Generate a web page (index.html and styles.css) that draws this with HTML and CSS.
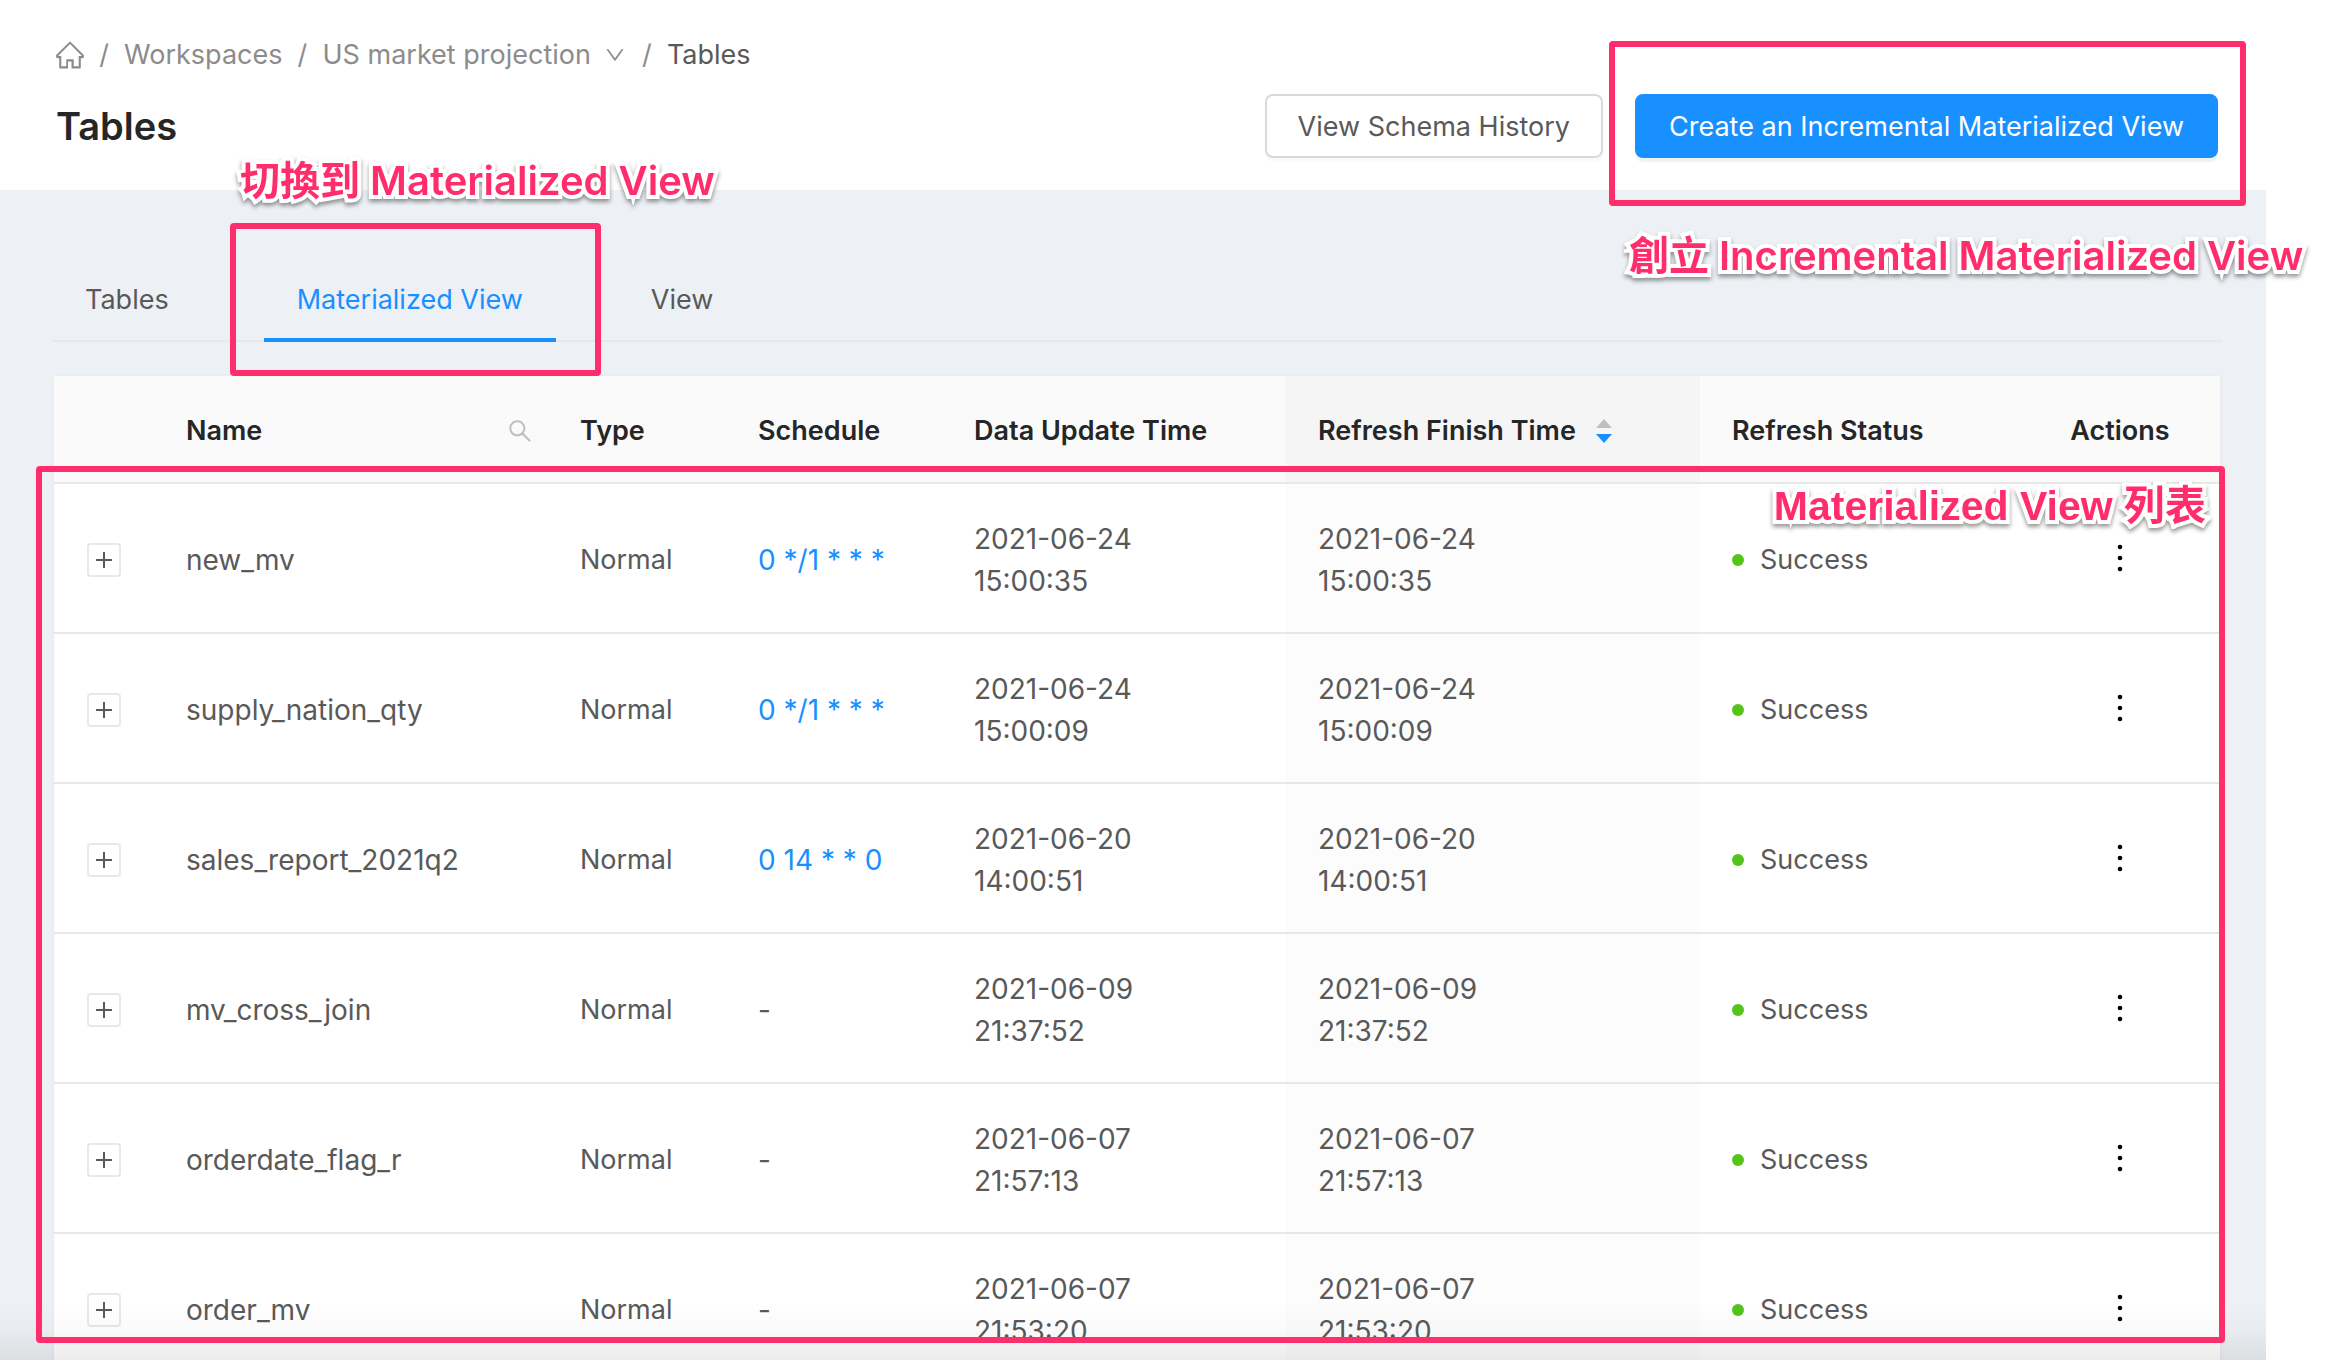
FILE: index.html
```html
<!DOCTYPE html>
<html lang="en">
<head>
<meta charset="utf-8">
<title>Tables</title>
<link rel="stylesheet" href="styles.css">
</head>
<body>
<svg class="defs" aria-hidden="true">
  <symbol id="home" viewBox="64 64 896 896"><path d="M946.5 505L534.600 93.400a31.930 31.930 0 0 0-45.200 0L77.500 505c-12 12-18.800 28.300-18.800 45.300 0 35.300 28.700 64 64 64h43.400V908c0 17.700 14.300 32 32 32H448V716h112v224h265.900c17.700 0 32-14.300 32-32V614.300h43.400c17 0 33.300-6.700 45.300-18.800 24.900-25 24.900-65.500-.1-90.500zM790 560v308H632V676c0-17.700-14.300-32-32-32H424c-17.700 0-32 14.300-32 32v192H234V542H130.900L512 161l381 381H790z" fill="currentColor"/></symbol>
  <symbol id="down" viewBox="64 64 896 896"><path d="M884 256h-75c-5.100 0-9.900 2.500-12.900 6.600L512 654.200 227.900 262.600c-3-4.100-7.800-6.600-12.900-6.600h-75c-6.500 0-10.300 7.400-6.500 12.700l352.600 486.100c12.800 17.600 39 17.600 51.700 0l352.600-486.100c3.900-5.300.1-12.700-6.400-12.700z" fill="currentColor"/></symbol>
  <symbol id="search" viewBox="64 64 896 896"><path d="M909.600 854.500L649.900 594.800C690.200 542.700 712 479 712 412c0-80.200-31.300-155.400-87.900-212.100-56.600-56.700-132-87.900-212.100-87.900s-155.500 31.300-212.100 87.900C143.200 256.500 112 331.800 112 412c0 80.100 31.300 155.500 87.900 212.100C256.500 680.800 331.800 712 412 712c67 0 130.600-21.800 182.700-62l259.700 259.600a8.200 8.200 0 0 0 11.600 0l43.600-43.500a8.200 8.200 0 0 0 0-11.600zM570.400 570.400C528 612.700 471.800 636 412 636s-116-23.300-158.400-65.600C211.300 528 188 471.800 188 412s23.300-116.100 65.600-158.400C296 211.300 352.200 188 412 188s116.100 23.200 158.400 65.600S636 352.200 636 412s-23.300 116.100-65.600 158.400z" fill="currentColor"/></symbol>
  <symbol id="more" viewBox="0 0 8 30"><circle cx="4" cy="4" r="2.300"/><circle cx="4" cy="15" r="2.300"/><circle cx="4" cy="26" r="2.300"/></symbol>
</svg>
<div class="page">
  <header class="header">
    <nav class="breadcrumb" aria-label="Breadcrumb">
      <a href="#" aria-label="Home"><svg class="icon-home"><use href="#home"/></svg></a>
      <span class="sep">/</span>
      <a href="#">Workspaces</a>
      <span class="sep">/</span>
      <a href="#" class="project">US market projection<svg class="icon-down"><use href="#down"/></svg></a>
      <span class="sep">/</span>
      <span class="current">Tables</span>
    </nav>
    <div class="title-row">
      <h1>Tables</h1>
      <div class="actions">
        <button class="btn" type="button">View Schema History</button>
        <div class="marked">
          <button class="btn primary" type="button">Create an Incremental Materialized View</button>
          <div class="frame frame-create"></div>
          <div class="note note-create">創立 Incremental Materialized View</div>
        </div>
      </div>
    </div>
  </header>
  <main class="content">
    <div class="tabs" role="tablist">
      <button class="tab" type="button" role="tab">Tables</button>
      <button class="tab active" type="button" role="tab" aria-selected="true">Materialized View</button>
      <button class="tab" type="button" role="tab">View</button>
      <div class="frame frame-tab"></div>
      <div class="note note-tab">切換到 Materialized View</div>
    </div>
    <div class="card">
      <table>
        <colgroup><col class="c-expand"><col><col class="c-type"><col class="c-schedule"><col class="c-update"><col class="c-finish"><col class="c-status"><col class="c-actions"></colgroup>
        <thead>
          <tr>
            <th aria-label="Expand"></th>
            <th><div class="head"><span>Name</span><svg class="icon-search"><use href="#search"/></svg></div></th>
            <th>Type</th>
            <th>Schedule</th>
            <th>Data Update Time</th>
            <th class="sorted"><div class="sorter"><span>Refresh Finish Time</span><span class="carets"><i class="up"></i><i class="down"></i></span></div></th>
            <th>Refresh Status</th>
            <th class="last">Actions</th>
          </tr>
        </thead>
        <tbody>
          <tr><td class="first"><button class="expand" type="button" aria-label="Expand row"></button></td><td class="data">new_mv</td><td>Normal</td><td class="data"><a href="#">0 */1 * * *</a></td><td class="data time">2021-06-24 15:00:35</td><td class="data time sorted">2021-06-24 15:00:35</td><td><span class="status">Success</span></td><td class="last"><button class="more" type="button" aria-label="Actions"><svg><use href="#more"/></svg></button></td></tr>
          <tr><td class="first"><button class="expand" type="button" aria-label="Expand row"></button></td><td class="data">supply_nation_qty</td><td>Normal</td><td class="data"><a href="#">0 */1 * * *</a></td><td class="data time">2021-06-24 15:00:09</td><td class="data time sorted">2021-06-24 15:00:09</td><td><span class="status">Success</span></td><td class="last"><button class="more" type="button" aria-label="Actions"><svg><use href="#more"/></svg></button></td></tr>
          <tr><td class="first"><button class="expand" type="button" aria-label="Expand row"></button></td><td class="data">sales_report_2021q2</td><td>Normal</td><td class="data"><a href="#">0 14 * * 0</a></td><td class="data time">2021-06-20 14:00:51</td><td class="data time sorted">2021-06-20 14:00:51</td><td><span class="status">Success</span></td><td class="last"><button class="more" type="button" aria-label="Actions"><svg><use href="#more"/></svg></button></td></tr>
          <tr><td class="first"><button class="expand" type="button" aria-label="Expand row"></button></td><td class="data">mv_cross_join</td><td>Normal</td><td class="data">-</td><td class="data time">2021-06-09 21:37:52</td><td class="data time sorted">2021-06-09 21:37:52</td><td><span class="status">Success</span></td><td class="last"><button class="more" type="button" aria-label="Actions"><svg><use href="#more"/></svg></button></td></tr>
          <tr><td class="first"><button class="expand" type="button" aria-label="Expand row"></button></td><td class="data">orderdate_flag_r</td><td>Normal</td><td class="data">-</td><td class="data time">2021-06-07 21:57:13</td><td class="data time sorted">2021-06-07 21:57:13</td><td><span class="status">Success</span></td><td class="last"><button class="more" type="button" aria-label="Actions"><svg><use href="#more"/></svg></button></td></tr>
          <tr><td class="first"><button class="expand" type="button" aria-label="Expand row"></button></td><td class="data">order_mv</td><td>Normal</td><td class="data">-</td><td class="data time">2021-06-07 21:53:20</td><td class="data time sorted">2021-06-07 21:53:20</td><td><span class="status">Success</span></td><td class="last"><button class="more" type="button" aria-label="Actions"><svg><use href="#more"/></svg></button></td></tr>
        </tbody>
      </table>
      <div class="frame frame-list"></div>
      <div class="note note-list">Materialized View 列表</div>
    </div>
  </main>
  <div class="fade"></div>
</div>
</body>
</html>
```
FILE: styles.css
```css
* { box-sizing: border-box; }
html, body { height: 100%; }
body {
  margin: 0;
  overflow: hidden;
  background: #fff;
  color: #595959;
  font: 27px/42px Inter, "Noto Sans CJK TC", sans-serif;
}
a { color: #1890ff; text-decoration: none; }
button { font: inherit; color: inherit; padding: 0; margin: 0; cursor: pointer; }
.defs { position: absolute; width: 0; height: 0; }
.page { position: relative; height: 100%; padding-right: 60px; overflow: hidden; }

.header { height: 190px; padding: 33px 48px 32px 56px; }
.breadcrumb { display: flex; align-items: center; height: 44px; color: #8c8c8c; white-space: nowrap; }
.breadcrumb a { color: #8c8c8c; display: flex; align-items: center; }
.breadcrumb .sep { width: 40px; text-align: center; }
.breadcrumb .current { color: #595959; }
.icon-home { width: 28px; height: 28px; }
.icon-down { width: 20px; height: 20px; margin: 0 2px 0 14px; }
.title-row { display: flex; align-items: center; justify-content: space-between; margin-top: 17px; }
h1 { margin: 0; font-size: 38px; line-height: 56px; font-weight: 600; color: #262626; }
.actions { display: flex; gap: 32px; }
.marked { position: relative; }
.btn {
  height: 64px;
  padding: 2px 31px 0;
  border: 2px solid #d9d9d9;
  border-radius: 8px;
  background: #fff;
  box-shadow: 0 4px 0 rgba(0, 0, 0, .02);
  white-space: nowrap;
}
.btn.primary { padding: 2px 32px 0; background: #1890ff; border-color: #1890ff; color: #fff; box-shadow: 0 4px 0 rgba(0, 0, 0, .05); }

.content { background: #edf1f5; min-height: 1170px; padding: 67px 46px 0 54px; }
.tabs { position: relative; display: flex; gap: 62px; height: 85px; margin: 0 -2px; border-bottom: 2px solid #e8e8e8; }
.tab { height: 85px; padding: 4px 33px 0; border: 0; border-bottom: 4px solid transparent; background: none; }
.tab.active { color: #1890ff; border-bottom-color: #1890ff; }

.card { position: relative; margin-top: 34px; background: #fff; border-radius: 4px 4px 0 0; box-shadow: 0 0 0 2px #e9ecf1; }
table { width: 100%; table-layout: fixed; border-collapse: separate; border-spacing: 0; }
.c-expand { width: 100px; }
.c-type { width: 178px; }
.c-schedule { width: 216px; }
.c-update { width: 344px; }
.c-finish { width: 414px; }
.c-status { width: 338px; }
.c-actions { width: 182px; }
th, td { padding: 4px 32px 0; border-bottom: 2px solid #e8e8e8; text-align: left; vertical-align: middle; }
th { height: 108px; background: #fafafa; color: #262626; font-weight: 600; white-space: nowrap; }
td { height: 150px; }
th.sorted { background: #f5f5f5; }
td.sorted { background: #fcfcfc; }
.data { font-size: 28px; }
.time { padding-right: 120px; }
.head { display: flex; align-items: center; justify-content: space-between; margin-right: -16px; }
.icon-search { width: 24px; height: 24px; color: #bfbfbf; }
.sorter { display: flex; align-items: center; gap: 20px; }
.carets { display: flex; flex-direction: column; gap: 6px; }
.carets i { border: 8px solid transparent; }
.carets .up { border-top: 0; border-bottom: 9px solid #bfbfbf; }
.carets .down { border-bottom: 0; border-top: 9px solid #1890ff; }
.first { padding-left: 33px; }
.expand {
  display: block;
  width: 34px;
  height: 34px;
  border: 2px solid #e8e8e8;
  border-radius: 4px;
  background:
    linear-gradient(#595959, #595959) center / 16px 2px no-repeat,
    linear-gradient(#595959, #595959) center / 2px 16px no-repeat,
    #fff;
}
.status { display: flex; align-items: center; gap: 16px; }
.status::before { content: ""; width: 12px; height: 12px; border-radius: 50%; background: #52c41a; }
th.last, td.last { padding-right: 50px; text-align: center; }
td.last { padding-top: 0; }
.more { border: 0; background: none; display: block; margin: 0 auto; }
.more svg { display: block; width: 8px; height: 30px; fill: #000; }

.fade { position: absolute; left: 0; right: 60px; bottom: 0; height: 60px; background: linear-gradient(rgba(0, 0, 0, 0), rgba(0, 0, 0, .02) 50%, rgba(0, 0, 0, .08)); pointer-events: none; }

.frame { position: absolute; z-index: 1; border: 6px solid #ff2d6c; border-radius: 4px; pointer-events: none; }
.frame-create { inset: -53px -28px -48px -26px; }
.frame-tab { left: 178px; top: -34px; width: 371px; height: 153px; }
.frame-list { left: -18px; right: -5px; top: 90px; height: 877px; }
.note {
  position: absolute;
  z-index: 2;
  color: #ff2d6c;
  font: 600 40px/56px Inter, "Noto Sans CJK TC", sans-serif;
  white-space: nowrap;
  -webkit-text-stroke: 8px #fff;
  stroke-linejoin: round;
  paint-order: stroke fill;
  filter: drop-shadow(0 3px 2px rgba(0, 0, 0, .4));
  pointer-events: none;
}
.note-create { left: -6px; top: 134px; }
.note-tab { left: 188px; top: -104px; }
.note-list { right: 14px; top: 102px; font: bold 41px/56px "Liberation Sans", "Noto Sans CJK TC", sans-serif; }
```
